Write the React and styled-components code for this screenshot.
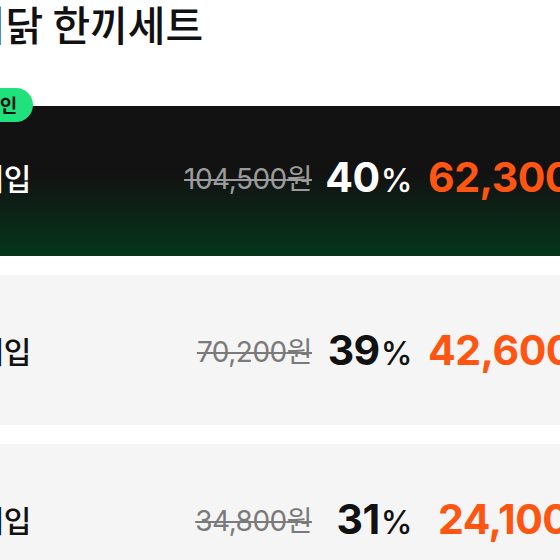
import styled, { createGlobalStyle } from "styled-components";

const GlobalStyle = createGlobalStyle`
  html, body {
    margin: 0;
    padding: 0;
    background: #ffffff;
    overflow: hidden;
  }
  body {
    font-family: "Inter", "Noto Sans CJK KR", sans-serif;
    -webkit-font-smoothing: antialiased;
  }
`;

const Page = styled.main`
  width: 750px;
  margin-left: -110px;
  display: flex;
  flex-direction: column;
`;

const Title = styled.h1`
  margin: -2px 0 0;
  padding-left: 40px;
  font-family: "Noto Sans CJK KR", sans-serif;
  font-size: 41px;
  line-height: 50px;
  font-weight: 500;
  color: #111111;
`;

const List = styled.ul`
  list-style: none;
  margin: 58px 0 0;
  padding: 0;
  display: flex;
  flex-direction: column;
  gap: 19px;
`;

const Card = styled.li`
  position: relative;
  height: 150px;
  box-sizing: border-box;
  padding: ${(p) => (p.$featured ? "0 32px 9px 52px" : "0 32px 0 52px")};
  display: grid;
  grid-template-columns: 1fr auto 84px 180px;
  column-gap: 16px;
  align-items: center;
  background: ${(p) =>
    p.$featured
      ? "linear-gradient(180deg, #121212 0%, #121212 45%, #05361b 100%)"
      : "#f5f5f5"};
`;

const Badge = styled.span`
  position: absolute;
  top: -18px;
  left: 39px;
  height: 34px;
  padding: 0 16px 0 14px;
  border-radius: 17px;
  background: #1fe27c;
  color: #111111;
  font-family: "Noto Sans CJK KR", sans-serif;
  font-size: 19px;
  font-weight: 700;
  line-height: 34px;
  white-space: nowrap;
`;

const Label = styled.span`
  font-family: "Noto Sans CJK KR", sans-serif;
  font-size: 30px;
  font-weight: 500;
  color: ${(p) => (p.$featured ? "#ffffff" : "#111111")};
  white-space: nowrap;
`;

const Original = styled.s`
  justify-self: end;
  font-size: 28px;
  font-weight: 400;
  letter-spacing: -0.5px;
  color: ${(p) => (p.$featured ? "#9b9b9b" : "#7a7a7a")};
  text-decoration-thickness: 2px;
  white-space: nowrap;
`;

const Discount = styled.span`
  justify-self: end;
  font-size: 41px;
  font-weight: 700;
  letter-spacing: -0.5px;
  color: ${(p) => (p.$featured ? "#ffffff" : "#111111")};
  white-space: nowrap;

  small {
    font-size: 32px;
    font-weight: 500;
    margin-left: 1px;
  }
`;

const Price = styled.span`
  justify-self: start;
  font-size: 41px;
  font-weight: 700;
  letter-spacing: -0.5px;
  color: #fe5512;
  white-space: nowrap;

  small {
    font-family: "Noto Sans CJK KR", sans-serif;
    font-size: 30px;
    font-weight: 700;
    margin-left: 2px;
  }
`;

const options = [
  { label: "30개입", original: "104,500", rate: 40, price: "62,300", featured: true },
  { label: "20개입", original: "70,200", rate: 39, price: "42,600" },
  { label: "10개입", original: "34,800", rate: 31, price: "24,100", shift: 10 },
];

export default function App() {
  return (
    <>
      <GlobalStyle />
      <Page>
        <Title>구이닭 한끼세트</Title>
        <List>
          {options.map((o) => (
            <Card key={o.label} $featured={o.featured}>
              {o.featured && <Badge>최대 할인</Badge>}
              <Label $featured={o.featured}>{o.label}</Label>
              <Original $featured={o.featured}>{o.original}원</Original>
              <Discount $featured={o.featured}>
                {o.rate}
                <small>%</small>
              </Discount>
              <Price style={o.shift ? { marginLeft: o.shift } : undefined}>
                {o.price}
                <small>원</small>
              </Price>
            </Card>
          ))}
        </List>
      </Page>
    </>
  );
}
